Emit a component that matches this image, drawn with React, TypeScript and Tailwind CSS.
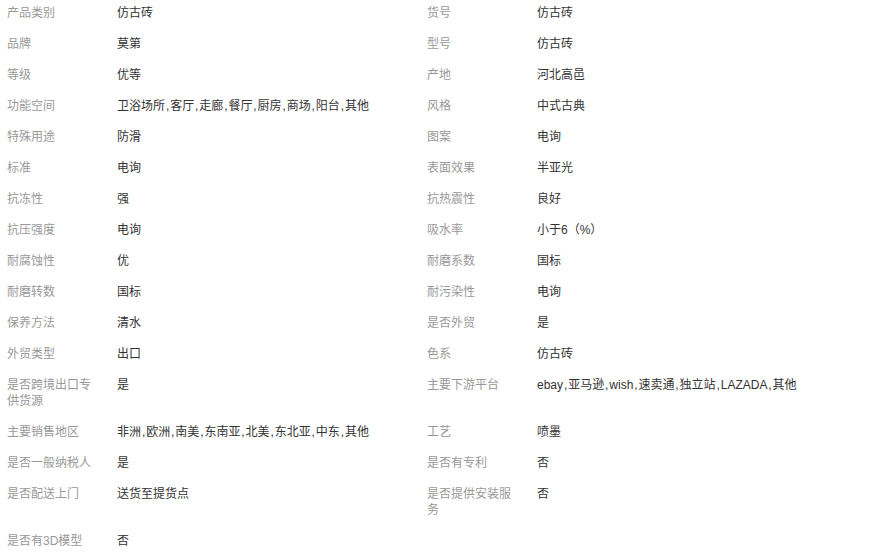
import React from 'react'

interface iAttr {
	label: string;
	value: string;
}

const attrs: iAttr[] = [
	{ label: '产品类别', value: '仿古砖' },
	{ label: '货号', value: '仿古砖' },
	{ label: '品牌', value: '莫第' },
	{ label: '型号', value: '仿古砖' },
	{ label: '等级', value: '优等' },
	{ label: '产地', value: '河北高邑' },
	{ label: '功能空间', value: '卫浴场所,客厅,走廊,餐厅,厨房,商场,阳台,其他' },
	{ label: '风格', value: '中式古典' },
	{ label: '特殊用途', value: '防滑' },
	{ label: '图案', value: '电询' },
	{ label: '标准', value: '电询' },
	{ label: '表面效果', value: '半亚光' },
	{ label: '抗冻性', value: '强' },
	{ label: '抗热震性', value: '良好' },
	{ label: '抗压强度', value: '电询' },
	{ label: '吸水率', value: '小于6（%）' },
	{ label: '耐腐蚀性', value: '优' },
	{ label: '耐磨系数', value: '国标' },
	{ label: '耐磨转数', value: '国标' },
	{ label: '耐污染性', value: '电询' },
	{ label: '保养方法', value: '清水' },
	{ label: '是否外贸', value: '是' },
	{ label: '外贸类型', value: '出口' },
	{ label: '色系', value: '仿古砖' },
	{ label: '是否跨境出口专供货源', value: '是' },
	{ label: '主要下游平台', value: 'ebay,亚马逊,wish,速卖通,独立站,LAZADA,其他' },
	{ label: '主要销售地区', value: '非洲,欧洲,南美,东南亚,北美,东北亚,中东,其他' },
	{ label: '工艺', value: '喷墨' },
	{ label: '是否一般纳税人', value: '是' },
	{ label: '是否有专利', value: '否' },
	{ label: '是否配送上门', value: '送货至提货点' },
	{ label: '是否提供安装服务', value: '否' },
	{ label: '是否有3D模型', value: '否' },
];

// commas in the reference are a bit wider than Arial's
const Value = ({ text }: { text: string }) => {
	const parts = text.split(',');

	return (
		<>
			{parts.map((part, index) => (
				<React.Fragment key={index}>
					{index > 0 ? <span className="px-[0.9px]">,</span> : null}
					{part}
				</React.Fragment>
			))}
		</>
	)
}

const App = () => {
	return (
		<div
			className="w-[873px] bg-white text-[12px] leading-[16px]"
			style={{ fontFamily: '"Liberation Sans", "Noto Sans CJK SC", sans-serif' }}
		>
			<div className="grid grid-cols-[420px_420px]">
				{attrs.map((attr) => (
					<div key={attr.label} className="flex pt-[5px] pb-[10px]">
						<div className="w-[117px] shrink-0 pl-[7px] pr-[22px] text-[#999]">
							{attr.label}
						</div>
						<div className="text-[#333]">
							<Value text={attr.value} />
						</div>
					</div>
				))}
			</div>
		</div>
	)
}

export default App
